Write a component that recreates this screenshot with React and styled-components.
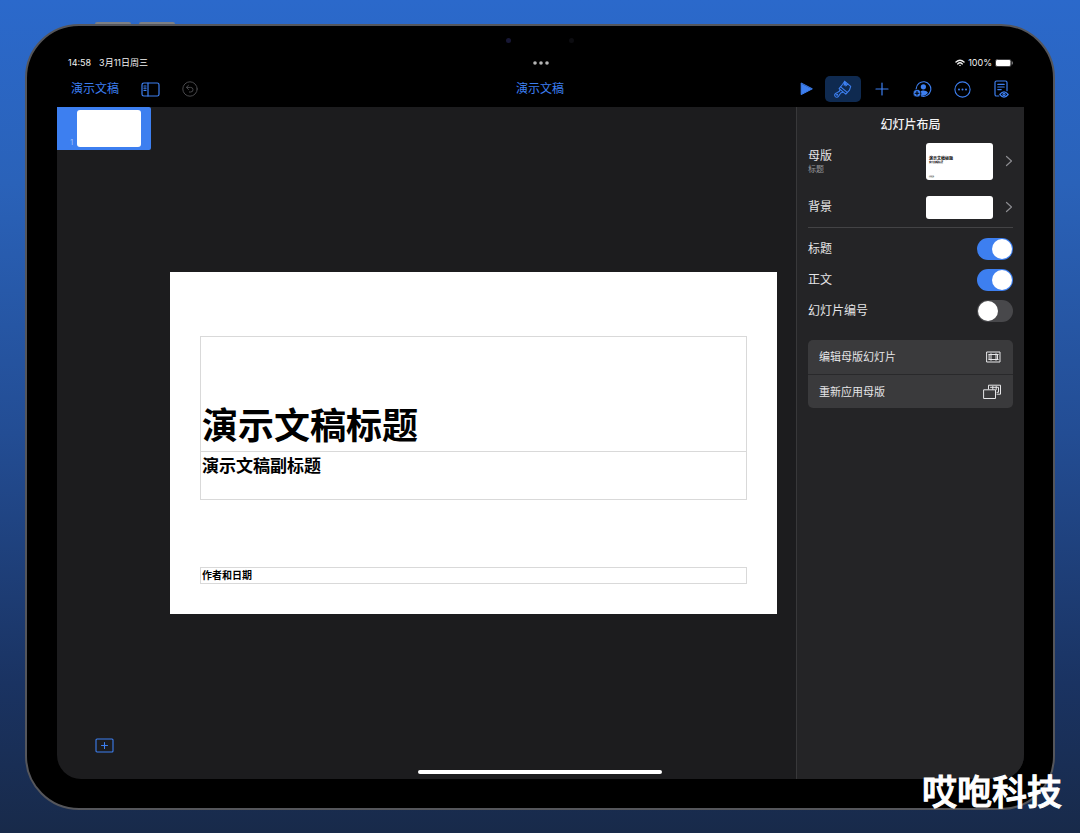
import React from "react";
import styled, { createGlobalStyle } from "styled-components";

const BLUE = "#3d7ff0";

const GlobalStyle = createGlobalStyle`
  *, *::before, *::after { box-sizing: border-box; }
  body {
    margin: 0;
    font-family: Inter, "Noto Sans CJK SC", sans-serif;
    color: #e6e6e8;
  }
  button {
    margin: 0;
    padding: 0;
    border: 0;
    background: none;
    color: inherit;
    font: inherit;
    cursor: pointer;
  }
  h1, h2, h3, p { margin: 0; font-weight: inherit; }
  svg { display: block; flex: none; }
`;

const Page = styled.div`
  position: relative;
  display: flex;
  min-height: 100vh;
  padding: 24px 25px 23px;
  background: linear-gradient(#2b69cb 0%, #2a62b9 22%, #234d94 52%, #1a3362 82%, #182a4a 100%);
`;

const Device = styled.div`
  position: relative;
  flex: 1;
  display: flex;
  flex-direction: column;
  min-width: 0;
  padding: 29px 29px 29px 30px;
  border: 2px solid #55565b;
  border-radius: 54px;
  background: #000;
`;

const HardwareKey = styled.span`
  position: absolute;
  top: -4px;
  left: ${(p) => p.$left}px;
  width: 36px;
  height: 2px;
  border-radius: 2px 2px 0 0;
  background: #7d7f84;
`;

const Lens = styled.span`
  position: absolute;
  top: 12px;
  left: 50%;
  width: 5px;
  height: 5px;
  margin-left: ${(p) => p.$shift}px;
  border-radius: 50%;
  background: ${(p) => p.$color};
`;

const StatusBar = styled.div`
  display: grid;
  grid-template-columns: 1fr auto 1fr;
  align-items: center;
  height: 16px;
  padding: 0 11px;
  font-size: 9px;
  line-height: 16px;
  color: #f2f2f2;
`;

const StatusGroup = styled.div`
  display: flex;
  align-items: center;
  justify-content: ${(p) => (p.$end ? "flex-end" : "flex-start")};
  gap: ${(p) => (p.$end ? 3 : 8)}px;
`;

const Toolbar = styled.header`
  display: grid;
  grid-template-columns: 1fr auto 1fr;
  align-items: center;
  height: 36px;
  padding: 0 5px 0 14px;
  color: ${BLUE};
`;

const ToolGroup = styled.nav`
  display: flex;
  align-items: center;
  justify-content: ${(p) => (p.$end ? "flex-end" : "flex-start")};
  gap: ${(p) => (p.$end ? 3 : 22)}px;
`;

const TextButton = styled.button`
  font-size: 12px;
  line-height: 18px;
`;

const DocTitle = styled.button`
  padding-right: 10px;
  font-size: 12px;
  line-height: 18px;
`;

const ToolButton = styled.button`
  display: grid;
  place-items: center;
  width: ${(p) => p.$width || 36}px;
  height: 26px;
  border-radius: 5px;
  background: ${(p) => (p.$active ? "#0f2a50" : "transparent")};
`;

const PlainIconButton = styled.button`
  color: ${(p) => (p.disabled ? "#48484b" : BLUE)};
`;

const Workspace = styled.div`
  flex: 1;
  display: flex;
  overflow: hidden;
  border-radius: 0 0 24px 24px;
  background: #1c1c1e;
`;

const Navigator = styled.aside`
  display: flex;
  flex-direction: column;
  justify-content: space-between;
  width: 94px;
`;

const SlideThumb = styled.button`
  display: flex;
  align-items: flex-end;
  justify-content: flex-end;
  gap: 4px;
  width: 94px;
  height: 43px;
  padding: 3px 10px 3px 0;
  border-radius: 0 2px 2px 0;
  background: ${BLUE};
  color: #a9caff;
  font-size: 7px;
  line-height: 9px;
`;

const ThumbPage = styled.span`
  width: 64px;
  height: 37px;
  border-radius: 3px;
  background: #fff;
`;

const AddSlide = styled.button`
  align-self: center;
  margin-bottom: 26px;
  color: ${BLUE};
`;

const Stage = styled.main`
  flex: 1;
  display: flex;
  align-items: center;
  min-width: 0;
  padding: 0 19px;
`;

const Slide = styled.article`
  display: flex;
  flex-direction: column;
  width: 100%;
  aspect-ratio: 16 / 9;
  padding: 64px 30px 30px;
  background: #fff;
  color: #000;
  font-weight: 700;
`;

const Placeholder = styled.div`
  display: flex;
  flex-direction: column;
  justify-content: ${(p) => (p.$bottom ? "flex-end" : "flex-start")};
  height: ${(p) => p.$height}px;
  padding: 0 1px;
  border: 1px solid #d9d9d9;
`;

const TitlePlaceholder = styled(Placeholder)`
  border-bottom: 0;
`;

const AuthorPlaceholder = styled(Placeholder)`
  margin-top: auto;
`;

const SlideTitle = styled.h1`
  font-size: 36px;
  line-height: 50px;
`;

const SlideSubtitle = styled.h2`
  font-size: 17px;
  line-height: 28px;
`;

const SlideAuthor = styled.p`
  font-size: 10px;
  line-height: 14px;
`;

const Panel = styled.aside`
  display: flex;
  flex-direction: column;
  width: 228px;
  padding: 8px 11px;
  border-left: 1px solid #38383a;
  background: #242426;
  font-size: 12px;
  line-height: 18px;
`;

const PanelTitle = styled.h2`
  font-size: 12px;
  font-weight: 500;
  line-height: 20px;
  text-align: center;
  color: #f4f4f5;
`;

const PickerRow = styled.button`
  display: flex;
  align-items: center;
  height: ${(p) => p.$height}px;
  text-align: left;
`;

const PickerLabel = styled.span`
  flex: 1;
  display: flex;
  flex-direction: column;
  line-height: 16px;
`;

const PickerNote = styled.small`
  font-size: 8px;
  line-height: 10px;
  color: #98989d;
`;

const Preview = styled.span`
  display: flex;
  flex-direction: column;
  width: 67px;
  height: ${(p) => p.$height}px;
  margin-right: 12px;
  padding: 13px 3px 2px;
  border-radius: 3px;
  background: #fff;
  color: #000;
  font-weight: 700;
`;

const PreviewText = styled.span`
  font-size: ${(p) => p.$size}px;
  line-height: ${(p) => p.$size + 1}px;
  margin-top: ${(p) => (p.$last ? "auto" : 0)};
`;

const Divider = styled.hr`
  width: 100%;
  height: 1px;
  margin: 0 0 5px;
  border: 0;
  background: #434345;
`;

const SwitchRow = styled.label`
  display: flex;
  align-items: center;
  justify-content: space-between;
  height: 31px;
`;

const Switch = styled.input`
  appearance: none;
  display: flex;
  width: 36px;
  height: 22px;
  margin: 0;
  padding: 1px;
  border-radius: 11px;
  background: #48484b;

  &::before {
    content: "";
    width: 20px;
    height: 20px;
    border-radius: 50%;
    background: #fff;
  }
  &:checked { background: ${BLUE}; justify-content: flex-end; }
`;

const ActionList = styled.div`
  display: flex;
  flex-direction: column;
  margin-top: 14px;
  overflow: hidden;
  border-radius: 5px;
  background: #3a3a3c;
`;

const ActionRow = styled.button`
  display: flex;
  align-items: center;
  justify-content: space-between;
  height: 34px;
  padding: 0 11px;
  font-size: 11px;

  & + & { border-top: 1px solid #29292b; }
`;

const HomeIndicator = styled.span`
  position: absolute;
  bottom: 34px;
  left: 50%;
  width: 244px;
  height: 4px;
  margin-left: -122px;
  border-radius: 2px;
  background: #fff;
`;

const Watermark = styled.p`
  position: absolute;
  right: 18px;
  bottom: 15px;
  font-size: 35px;
  font-weight: 500;
  line-height: 52px;
  color: #fff;
  -webkit-text-stroke: 1px #fff;
`;

const Icon = ({ w, h, children, sw = 1 }) => (
  <svg width={w} height={h} viewBox={`0 0 ${w} ${h}`} fill="none" stroke="currentColor" strokeWidth={sw} strokeLinecap="round" strokeLinejoin="round" aria-hidden="true">
    {children}
  </svg>
);

const WifiIcon = () => (
  <Icon w={10} h={8} sw={1.4}>
    <path d="M1 3.1Q5-.6 9 3.1M2.7 4.9Q5 2.8 7.3 4.9" />
    <path d="M4 6.2Q5 5.3 6 6.2L5 7.3Z" fill="currentColor" stroke="none" />
  </Icon>
);
const BatteryIcon = () => (
  <Icon w={18} h={8}>
    <rect x="0.4" y="0.4" width="15.6" height="7.2" rx="1.8" stroke="#77777a" strokeWidth=".6" />
    <rect x="1" y="1" width="14.4" height="6" rx="1.3" fill="#fff" stroke="none" />
    <path d="M17.3 3v2" stroke="#88888a" />
  </Icon>
);
const DotsIcon = () => (
  <Icon w={16} h={4}>
    <g fill="#b5b5b5" stroke="none">
      <circle cx="2" cy="2" r="1.8" /><circle cx="8" cy="2" r="1.8" /><circle cx="14" cy="2" r="1.8" />
    </g>
  </Icon>
);
const SidebarIcon = () => (
  <Icon w={19} h={15} sw={1.2}>
    <rect x="1" y="1" width="17" height="13" rx="1.8" />
    <path d="M7 1v13M3 4h2M3 6.2h2M3 8.4h2" />
  </Icon>
);
const UndoIcon = () => (
  <Icon w={16} h={16}>
    <circle cx="8" cy="8" r="7.2" />
    <path d="M6.5 4.3L4.3 6.4l2.2 2.1M4.5 6.4h4.2a2.3 2.3 0 0 1 0 4.6H7.4" />
  </Icon>
);
const PlayIcon = () => (
  <Icon w={13} h={14}>
    <path d="M1.2 1.4v11.2L12 7Z" fill="currentColor" />
  </Icon>
);
const BrushIcon = () => (
  <Icon w={18} h={18} sw={1.1}>
    <path d="M10.7 1.3l6 5-1.2 3.8-3.7 4.1-6.7-5.6 3.4-4.1Z" />
    <path d="M6.7 6.9l6.5 5.5M10.7 1.3l-.5 4 1.8-2.7-.2 3.3 2-1.9" />
    <path d="M6.1 9.5l-.7 1.7-3.2 1.9a2.1 2.1 0 1 0 2.5 2.9l2-3 2.1-.8" />
    <circle cx="3.1" cy="14.8" r=".5" />
  </Icon>
);
const PlusIcon = () => (
  <Icon w={14} h={14} sw={1.2}><path d="M7 1v12M1 7h12" /></Icon>
);
const CollaborateIcon = () => (
  <Icon w={19} h={17} sw={1.1}>
    <path d="M3.2 7.6A7.3 7.3 0 1 1 8.3 15" />
    <circle cx="10.4" cy="5.8" r="2.6" fill="currentColor" stroke="none" />
    <path d="M8 14.6c.4-1.4 0-2.9-.8-3.8 1.6-1.8 6-2 7.8 1-1.6 2.4-4.5 3.5-7 2.8Z" fill="currentColor" stroke="none" />
    <circle cx="4" cy="12.2" r="3.8" fill="currentColor" stroke="#000" strokeWidth=".6" />
    <path d="M4 10.4v3.6M2.2 12.2h3.6" stroke="#000" />
  </Icon>
);
const MoreIcon = () => (
  <Icon w={17} h={17} sw={1.1}>
    <circle cx="8.5" cy="8.5" r="7.6" />
    <g fill="currentColor" stroke="none"><circle cx="5" cy="8.5" r="1" /><circle cx="8.5" cy="8.5" r="1" /><circle cx="12" cy="8.5" r="1" /></g>
  </Icon>
);
const ReadIcon = () => (
  <Icon w={15} h={18} sw={1.2}>
    <path d="M4.7 16H2.6Q1 16 1 14.4V2.6Q1 1 2.6 1h8.8Q13 1 13 2.6v8.1M3.8 4.4h6.4M3.8 7h6.4M3.8 9.6h3.4" />
    <path d="M5.8 14.5q4.2-5.2 8.4 0-4.2 5.2-8.4 0Z" />
    <circle cx="10" cy="14.5" r="1.1" />
  </Icon>
);
const ChevronIcon = () => (
  <Icon w={8} h={12} sw={1.2}><g stroke="#8b8b8f"><path d="M1.5 1.5L6.5 6l-5 4.5" /></g></Icon>
);
const AddSlideIcon = () => (
  <Icon w={19} h={15} sw={1.1}>
    <rect x="1" y="1" width="17" height="13" rx="1" />
    <path d="M9.5 4.5v6M6.5 7.5h6" />
  </Icon>
);
const MasterIcon = () => (
  <Icon w={16} h={12}>
    <rect x="1" y="1" width="13" height="10" />
    <path d="M3.5 3.5h8v5h-8ZM5 2.7v6.6M10 2.7v6.6M2.8 3.5h9.4M2.8 8.5h9.4" />
  </Icon>
);
const ReapplyIcon = () => (
  <Icon w={19} h={16}>
    <path d="M5.5 5V1.2h12v9H14" />
    <path d="M1 5.8h11.5v8.7H1Z" />
    <path d="M7.5 3.3h8v5H14M9.8 2.5v2.9M13.2 2.5v3.3" />
  </Icon>
);

const toggles = [
  ["title", "标题", true],
  ["body", "正文", true],
  ["number", "幻灯片编号", false],
];

export default function App() {
  return (
    <Page>
      <GlobalStyle />
      <Device>
        <HardwareKey $left={68} />
        <HardwareKey $left={112} />
        <Lens $shift={-34} $color="#171735" />
        <Lens $shift={29} $color="#0c0c10" />
        <StatusBar>
          <StatusGroup><span>14:58</span><span>3月11日周三</span></StatusGroup>
          <DotsIcon />
          <StatusGroup $end><WifiIcon /><span>100%</span><BatteryIcon /></StatusGroup>
        </StatusBar>
        <Toolbar>
          <ToolGroup>
            <TextButton>演示文稿</TextButton>
            <PlainIconButton aria-label="边栏"><SidebarIcon /></PlainIconButton>
            <PlainIconButton aria-label="撤销" disabled><UndoIcon /></PlainIconButton>
          </ToolGroup>
          <DocTitle>演示文稿</DocTitle>
          <ToolGroup $end>
            <ToolButton $width={32} aria-label="播放"><PlayIcon /></ToolButton>
            <ToolButton $active aria-label="格式"><BrushIcon /></ToolButton>
            <ToolButton aria-label="添加"><PlusIcon /></ToolButton>
            <ToolButton $width={38} aria-label="协作"><CollaborateIcon /></ToolButton>
            <ToolButton aria-label="更多"><MoreIcon /></ToolButton>
            <ToolButton aria-label="阅读视图"><ReadIcon /></ToolButton>
          </ToolGroup>
        </Toolbar>
        <Workspace>
          <Navigator>
            <SlideThumb>1<ThumbPage /></SlideThumb>
            <AddSlide aria-label="添加幻灯片"><AddSlideIcon /></AddSlide>
          </Navigator>
          <Stage>
            <Slide>
              <TitlePlaceholder $height={115} $bottom><SlideTitle>演示文稿标题</SlideTitle></TitlePlaceholder>
              <Placeholder $height={49}><SlideSubtitle>演示文稿副标题</SlideSubtitle></Placeholder>
              <AuthorPlaceholder $height={17}><SlideAuthor>作者和日期</SlideAuthor></AuthorPlaceholder>
            </Slide>
          </Stage>
          <Panel>
            <PanelTitle>幻灯片布局</PanelTitle>
            <PickerRow $height={52}>
              <PickerLabel>母版<PickerNote>标题</PickerNote></PickerLabel>
              <Preview $height={37} aria-hidden="true">
                <PreviewText $size={4}>演示文稿标题</PreviewText>
                <PreviewText $size={2}>演示文稿副标题</PreviewText>
                <PreviewText $size={1} $last>作者和日期</PreviewText>
              </Preview>
              <ChevronIcon />
            </PickerRow>
            <PickerRow $height={40}>
              <PickerLabel>背景</PickerLabel>
              <Preview $height={23} />
              <ChevronIcon />
            </PickerRow>
            <Divider />
            {toggles.map(([id, label, on]) => (
              <SwitchRow key={id} htmlFor={id}>
                {label}
                <Switch id={id} type="checkbox" role="switch" defaultChecked={on} />
              </SwitchRow>
            ))}
            <ActionList>
              <ActionRow>编辑母版幻灯片<MasterIcon /></ActionRow>
              <ActionRow>重新应用母版<ReapplyIcon /></ActionRow>
            </ActionList>
          </Panel>
        </Workspace>
        <HomeIndicator />
      </Device>
      <Watermark>哎咆科技</Watermark>
    </Page>
  );
}
